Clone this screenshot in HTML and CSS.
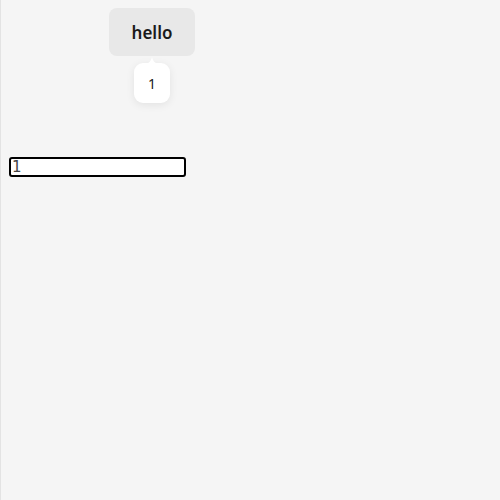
FILE: index.html
```html
<!DOCTYPE html>
<html>
<head>
<meta charset="utf-8">
<link rel="stylesheet" href="styles.css">
</head>
<body>
<div class="page">
  <div class="top">
    <div class="anchor">
      <button class="btn">hello</button>
      <div class="tip">
        <svg class="tip-arrow" width="16" height="7" viewBox="0 0 16 7"><path d="M0 7 C5 7 7 4 8 0 C9 4 11 7 16 7 Z" fill="#fff"/></svg>
        <span>1</span>
      </div>
    </div>
  </div>
  <input class="field" type="text" value="1" autofocus>
</div>
</body>
</html>
```
FILE: styles.css
```css
html, body {
  margin: 0;
  height: 100%;
}
body {
  background: #f5f5f5;
  border-left: 1px solid #e3e3e3;
  box-sizing: border-box;
}
.page {
  padding: 8px 8px 8px 8px;
}
.top {
  display: flex;
  padding-left: 100px;
  height: 149px;
}
.anchor {
  position: relative;
  height: 48px;
}
.btn {
  font-family: "Noto Sans", sans-serif;
  font-weight: 600;
  font-size: 17px;
  color: #1a1a1a;
  background: #e8e8e8;
  border: none;
  border-radius: 8px;
  width: 86px;
  height: 48px;
  padding: 0;
  margin: 0;
}
.tip {
  position: absolute;
  top: 55px;
  left: 25px;
  width: 36px;
  height: 40px;
  background: #fff;
  border-radius: 9px;
  box-shadow: 0 2px 8px rgba(0,0,0,0.08);
  display: flex;
  align-items: center;
  justify-content: center;
  font-family: "Noto Sans", sans-serif;
  font-size: 14px;
  color: #1a1a1a;
}
.tip-arrow {
  position: absolute;
  top: -6px;
  left: 10px;
}
.field {
  display: block;
  box-sizing: border-box;
  width: 177px;
  height: 20px;
  margin: 0;
  padding: 0 1px;
  border: 2px solid #000;
  border-radius: 3px;
  outline: none;
  background: #fff;
  font-family: "DejaVu Sans", sans-serif;
  font-size: 15px;
  line-height: 16px;
  color: #444;
}
```
